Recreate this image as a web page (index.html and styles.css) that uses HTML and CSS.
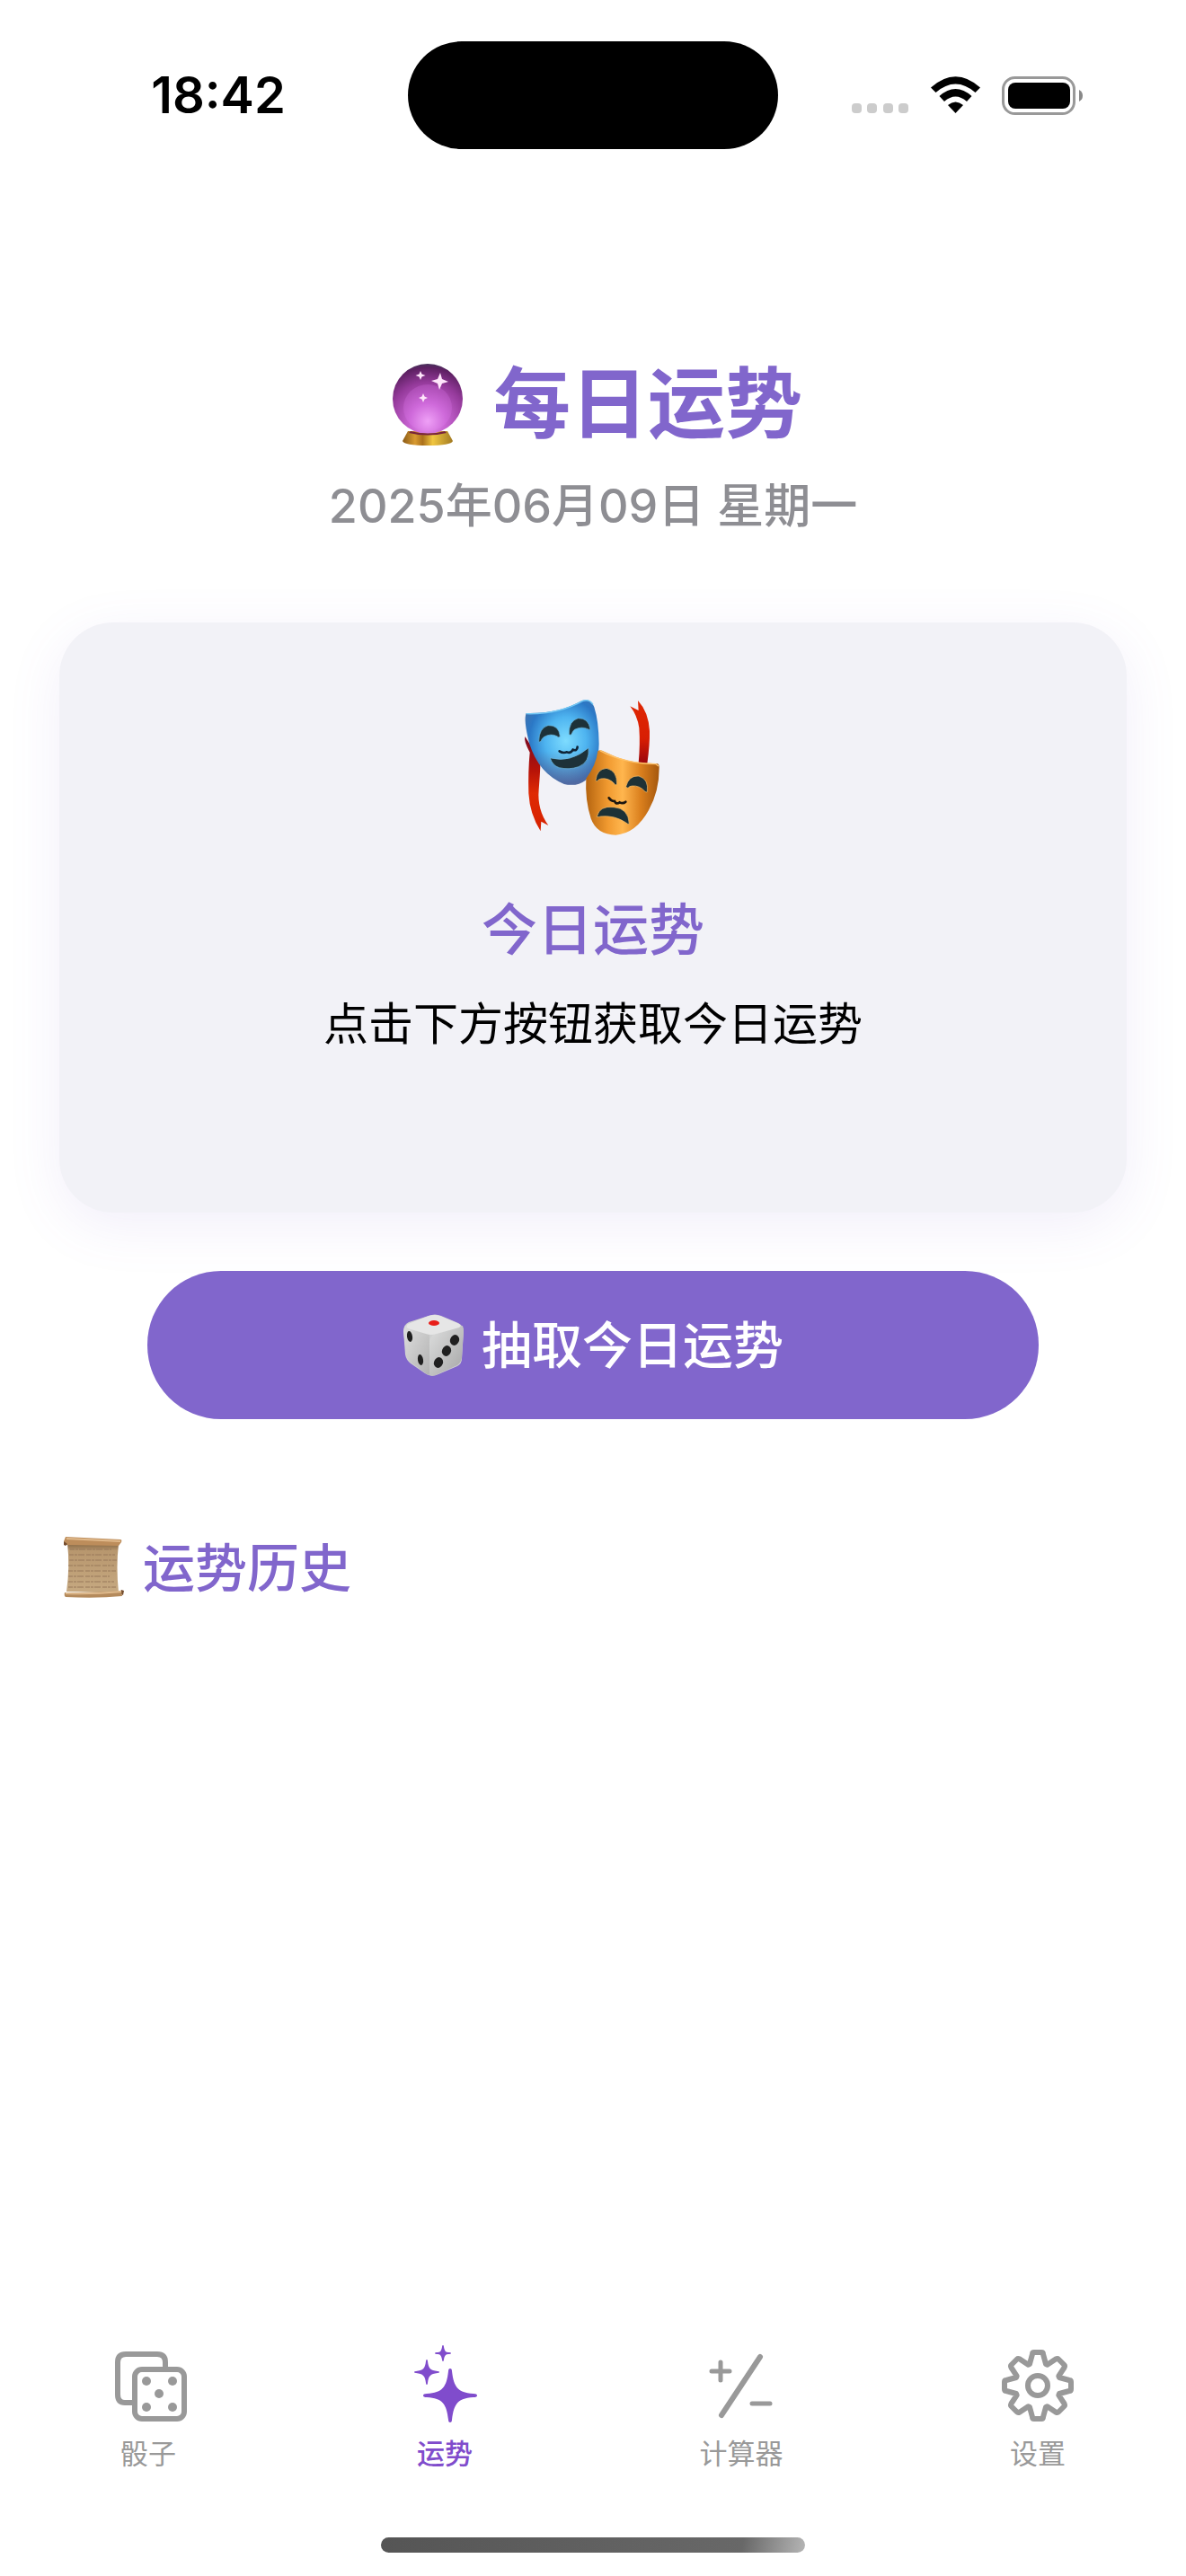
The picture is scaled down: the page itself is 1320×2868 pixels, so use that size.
FILE: index.html
```html
<!DOCTYPE html>
<html lang="zh-CN">
<head>
  <meta charset="UTF-8" />
  <meta name="viewport" content="width=device-width, initial-scale=1" />
  <title>每日运势</title>
  <link rel="stylesheet" href="styles.css">
</head>
<body>
  <div class="status-bar">
    <div class="time">18:42</div>
    <div class="island"></div>
    <div class="status-icons">
      <svg class="signal" viewBox="0 0 64 44" aria-hidden="true">
        <rect x="0" y="31" width="11" height="11" rx="4" />
        <rect x="17" y="31" width="11" height="11" rx="4" />
        <rect x="35" y="31" width="11" height="11" rx="4" />
        <rect x="52" y="31" width="11" height="11" rx="4" />
      </svg>
      <svg class="wifi" viewBox="0 0 55 44" aria-hidden="true">
        <path d="M0 13.500Q27.500-11 55 13.500L49.500 19Q27.500 0 5.500 19Z" />
        <path d="M9.500 23Q27.500 7 45.500 23L40 29Q27.500 18 15 29Z" />
        <path d="M19 33Q27.500 26 36 33L27.500 42Z" />
      </svg>
      <svg class="battery" viewBox="0 0 90 44" aria-hidden="true">
        <rect x="1.500" y="2.500" width="79" height="40" rx="13" fill="none" stroke="#999" stroke-width="3" />
        <rect x="7" y="8" width="69" height="29" rx="8" />
        <path d="M86 16q4 2 4 6.500t-4 6.500z" fill="#888" />
      </svg>
    </div>
  </div>

  <main>
    <header>
      <h1>
        <svg class="ball" viewBox="-10 -4 98 98" aria-hidden="true">
          <defs>
            <radialGradient id="ball" cx="50%" cy="82%" r="85%">
              <stop offset="0" stop-color="#f0a8f6" />
              <stop offset=".3" stop-color="#c864d3" />
              <stop offset=".65" stop-color="#953a9b" />
              <stop offset=".9" stop-color="#5d2062" />
              <stop offset="1" stop-color="#3d3b58" />
            </radialGradient>
            <linearGradient id="gold">
              <stop offset="0" stop-color="#8a5a16" />
              <stop offset=".25" stop-color="#d89a31" />
              <stop offset=".4" stop-color="#ab701c" />
              <stop offset=".6" stop-color="#f0c640" />
              <stop offset="1" stop-color="#a27a22" />
            </linearGradient>
          </defs>
          <path d="M17 75h44l6 11q-2 5-28 5t-28-5z" fill="url(#gold)" />
          <circle cx="39" cy="39" r="39" fill="url(#ball)" />
          <ellipse cx="39" cy="49" rx="27" ry="26" fill="#eb82fa" opacity=".2" />
          <path d="M20 75q19 5 38 0l2 2q-21 5-42 0z" fill="#78243c" />
          <path d="M31 8l1.500 3.500 4 1.500-4 1.500L31 18l-1.500-3.500-4-1.500 4-1.500zM53 10l2 7 7 3-7 2-3 7-2-7-7-3 7-2zM34 33l1.500 3.500 3.500 1.500-3.500 1.500L34 43l-1.500-3.500L29 38l3.500-1.500z" fill="#ffe6fb" />
        </svg>
        <span>每日运势</span>
      </h1>
      <p class="date">2025年06月09日 星期一</p>
    </header>

    <section class="card">
      <svg class="masks" viewBox="0 0 660 600" aria-hidden="true">
        <defs>
          <radialGradient id="blue" cx="55%" cy="48%" r="62%">
            <stop offset="0" stop-color="#7edcff" />
            <stop offset=".45" stop-color="#4eb4f0" />
            <stop offset=".8" stop-color="#2b78c6" />
            <stop offset="1" stop-color="#3d73b2" />
          </radialGradient>
          <linearGradient id="orange">
            <stop offset="0" stop-color="#b5640f" />
            <stop offset=".3" stop-color="#f19a30" />
            <stop offset=".5" stop-color="#ffb64e" />
            <stop offset=".75" stop-color="#da7f1d" />
            <stop offset="1" stop-color="#a4570d" />
          </linearGradient>
          <linearGradient id="ribbon" x1="0" y1="0" x2="0" y2="1">
            <stop offset="0" stop-color="#7b0a22" />
            <stop offset=".35" stop-color="#b51208" />
            <stop offset=".6" stop-color="#df2a04" />
            <stop offset="1" stop-color="#d62100" />
          </linearGradient>
          <linearGradient id="ribbonUp" x1="0" y1="1" x2="0" y2="0">
            <stop offset="0" stop-color="#99060d" />
            <stop offset=".4" stop-color="#d81e03" />
            <stop offset="1" stop-color="#df2703" />
          </linearGradient>
          <linearGradient id="glow" x1="0" y1="0" x2="0" y2="1">
            <stop offset=".6" stop-color="#984343" stop-opacity="0" />
            <stop offset="1" stop-color="#985060" stop-opacity=".35" />
          </linearGradient>
        </defs>
        <path d="M103 210q-5 14 16 53-6 63-4 137 4 70 40 126l2-32 24 13q-38-52-32-119 4-51 6-98z" fill="url(#ribbon)" />
        <path d="M454 109q24 31 30 72 4 55-2 118l29 2q9-66 8-110-4-64-39-101l2 33z" fill="url(#ribbonUp)" />
        <path d="M107 132Q214 135 293 90q29-10 41 22 15 47 16 123-1 70-45 121-29 22-71 13-85-35-116-134-21-80-11-103z" fill="url(#blue)" />
        <path d="M107 132Q214 135 293 90q29-10 41 22 15 47 16 123-1 70-45 121-29 22-71 13-85-35-116-134-21-80-11-103z" fill="url(#glow)" />
        <path d="M107 134Q214 137 296 91q22-7 34 12" fill="none" stroke="#72c8f4" stroke-width="4" />
        <g fill="#1d3138" stroke="#70b8dd" stroke-width="2">
          <path d="M149 226q1-45 31-53 36-2 40 37-6 5-10-1-22-11-45 3-6 5-9 14-4 4-7 0z" />
          <path d="M250 202q-1-44 30-53 34-2 41 36-3 4-8 0-21-10-45 2-7 6-9 14-4 7-9 1z" />
          <path d="M188 282q68 17 127-34 5 48-33 63-31 11-65 3-22-7-30-32z" />
        </g>
        <path d="M218 259q12 8 25 3 12 6 20-8 14 6 15-9" fill="none" stroke="#102537" stroke-width="8" stroke-linecap="round" />
        <path d="M346 259q7-8 23 2 80 42 173 39 10 0 9 15 0 78-35 141-43 78-110 83-64-1-83-55-20-64-16-134 33-43 39-91z" fill="url(#orange)" />
        <path d="M353 257q82 44 187 45l9 7" fill="none" stroke="#ffc36b" stroke-width="4" />
        <g fill="#1d3136" stroke="#ffc36b" stroke-width="2">
          <path d="M339 356q4-37 36-40 36 8 35 54-5 4-8-2-20-21-45-17-9 2-13 8-4 1-5-3z" />
          <path d="M440 377q10-38 43-35 34 10 28 53-4 3-8-2-18-20-42-18-9 0-14 7-5 0-7-5z" />
          <path d="M343 478q8-38 56-32 50 3 52 57-5 0-12-6-38-25-84-20-6 3-12 1z" />
        </g>
        <path d="M383 415q8 12 19 11 5 12 17 4 11 6 20-2" fill="none" stroke="#1a1611" stroke-width="8" stroke-linecap="round" />
      </svg>
      <h2>今日运势</h2>
      <p>点击下方按钮获取今日运势</p>
    </section>

    <button type="button" class="draw-btn">
      <svg class="die" viewBox="0 0 72 72" aria-hidden="true">
        <defs>
          <linearGradient id="dieLeft" x1="0" y1="0" x2="1" y2="1">
            <stop offset="0" stop-color="#dedede" />
            <stop offset="1" stop-color="#b2b2b2" />
          </linearGradient>
          <linearGradient id="dieRight" x1="0" y1="0" x2="1" y2="1">
            <stop offset="0" stop-color="#dedfdf" />
            <stop offset="1" stop-color="#a6a6a6" />
          </linearGradient>
        </defs>
        <path d="M7 10L29 3q7-3 14 0l19 8q6 3 6 9l-2 31q0 5-5 8L40 68q-8 4-15-1L9 56q-5-4-6-10L1 20q0-7 6-10z" fill="#d0d1d1" />
        <path d="M3 14L30 24V69q-4-1-7-4L8 54q-3-3-4-8L1 20z" fill="url(#dieLeft)" />
        <path d="M67 14L34 24Q30 28 30 34V69q5 2 11-2l20-9q5-4 5-9l2-30z" fill="url(#dieRight)" />
        <path d="M6 12L29 3q6-2 13 0l21 9q3 2 0 4L38 23q-6 2-12 0L6 17q-3-3 0-5z" fill="#e6e6e6" />
        <ellipse cx="35" cy="11" rx="6" ry="3" fill="#e81e19" />
        <g fill="#202020">
          <ellipse cx="8" cy="26" rx="3" ry="6" transform="rotate(-9 8 26)" />
          <ellipse cx="20" cy="52" rx="3" ry="6" transform="rotate(-9 20 52)" />
          <ellipse cx="58" cy="30" rx="5" ry="6" transform="rotate(22 58 30)" />
          <ellipse cx="49" cy="42" rx="5" ry="6" transform="rotate(22 49 42)" />
          <ellipse cx="40" cy="55" rx="5" ry="6" transform="rotate(22 40 55)" />
        </g>
      </svg>
      <span>抽取今日运势</span>
    </button>

    <section class="history">
      <h3>
        <svg class="scroll" viewBox="0 0 68 70" aria-hidden="true">
          <defs>
            <linearGradient id="paper" x1="0" y1="0" x2="0" y2="1">
              <stop offset="0" stop-color="#80623f" />
              <stop offset=".15" stop-color="#b8976e" />
              <stop offset="1" stop-color="#c6a981" />
            </linearGradient>
          </defs>
          <path d="M4 7l57 1q-3 25 0 54l-58-1q4-28 1-54z" fill="url(#paper)" />
          <path d="M2 0l61 3q2 0 1 3l-3 4-59-1-2-4z" fill="#bd8d5b" />
          <path d="M3 2l60 3" stroke="#e0b98b" stroke-width="2" />
          <path d="M0 5l4 3-2 2-2-1zM64 59l3 1-1 5-4-2z" fill="#744c2e" />
          <path d="M1 62q30 0 63-2l1 6q-29 3-63 1-2-1-1-5z" fill="#b48a5c" />
          <path d="M2 63q30 1 62-2" fill="none" stroke="#dfba8d" stroke-width="2" />
          <g stroke="#98795a" stroke-width="1" stroke-dasharray="5 1 3 1 7 2">
            <path d="M7 14h46M6 20h51M6 26h53M5 32h51M5 38h53M5 44h46M5 50h51M5 56h53" />
          </g>
        </svg>
        <span>运势历史</span>
      </h3>
    </section>
  </main>

  <nav class="tab-bar">
    <a href="#dice">
      <svg viewBox="0 0 86 86" fill="none" stroke="currentColor" stroke-width="6" aria-hidden="true">
        <path d="M26 63h-9q-8 0-8-9V18q0-9 9-9h35q9 0 9 9v7" />
        <rect x="28" y="26" width="55" height="55" rx="8" />
        <g fill="currentColor" stroke="none">
          <circle cx="41" cy="39" r="5" />
          <circle cx="70" cy="39" r="5" />
          <circle cx="55" cy="53" r="5" />
          <circle cx="41" cy="68" r="5" />
          <circle cx="70" cy="68" r="5" />
        </g>
      </svg>
      <span>骰子</span>
    </a>
    <a href="#fortune" class="active">
      <svg viewBox="0 0 86 86" fill="currentColor" aria-hidden="true">
        <path d="M49 25q2 0 2 3C53 45 57 52 75 53q4 0 4 2t-4 2C57 58 53 65 51 82q0 3-2 3t-2-3C45 65 41 58 23 57q-4 0-4-2t4-2C41 52 45 45 47 28q0-3 2-3z" />
        <path d="M23 15q1 0 1 2C25 25 27 27 35 28q2 0 2 1t-2 1C27 31 25 33 24 41q0 2-1 2t-1-2C21 33 19 31 11 30q-2 0-2-1t2-1C19 27 21 25 22 17q0-2 1-2z" />
        <path d="M41-1q1 0 1 2C43 6 44 7 48 7q2 0 2 1t-2 1C44 9 43 10 42 15q0 2-1 2t-1-2C39 10 38 9 34 9q-2 0-2-1t2-1C38 7 39 6 40 1q0-2 1-2z" />
      </svg>
      <span>运势</span>
    </a>
    <a href="#calculator">
      <svg viewBox="0 0 86 86" fill="none" stroke="currentColor" stroke-width="5" stroke-linecap="round" aria-hidden="true">
        <path d="M10 28h20M20 18v20" />
        <path d="M64 12L21 77" stroke-width="6" />
        <path d="M55 64h20" />
      </svg>
      <span>计算器</span>
    </a>
    <a href="#settings">
      <svg viewBox="-3 -4 86 86" fill="none" stroke="currentColor" stroke-width="6" stroke-linejoin="round" aria-hidden="true">
        <path d="M31 16L34 5q0-2 2-2h8q2 0 2 2l3 11 1.600.700L60 10.500q2-1 3 0l6.500 6.500q1 1 0 3l-6.200 9.400.7 1.600 11 3q2 0 2 2v8q0 2-2 2l-11 3-.7 1.600 6.200 9.400q1 2 0 3L63 69.500q-1 1-3 0l-9.400-6.200L49 64l-3 11q0 2-2 2h-8q-2 0-2-2l-3-11-1.600-.7L20 69.500q-2 1-3 0L10.500 63q-1-1 0-3l6.200-9.400L16 49 5 46q-2 0-2-2v-8q0-2 2-2l11-3 .7-1.600L10.500 20q-1-2 0-3l6.500-6.500q1-1 3 0l9.400 6.200z" />
        <circle cx="40" cy="40" r="11" />
      </svg>
      <span>设置</span>
    </a>
  </nav>
  <div class="home-indicator"></div>
</body>
</html>
```
FILE: styles.css
```css
* {
  box-sizing: border-box;
  margin: 0;
  padding: 0;
}

body {
  font-family: Inter, "Noto Sans CJK SC", sans-serif;
  background: #fff;
  color: #000;
  min-height: 100vh;
  display: flex;
  flex-direction: column;
}

svg {
  flex: none;
  overflow: visible;
}

/* Status bar */
.status-bar {
  display: grid;
  grid-template-columns: 1fr auto 1fr;
  align-items: center;
  padding-top: 46px;
}

.time {
  padding-left: 32px;
  text-align: center;
  font-size: 56px;
  font-weight: 600;
}

.island {
  width: 412px;
  height: 120px;
  border-radius: 60px;
  background: #000;
}

.status-icons {
  display: flex;
  justify-content: center;
  gap: 24px;
  padding-right: 34px;
}

.status-icons svg {
  height: 44px;
}

.signal {
  width: 64px;
  fill: #ccc;
}

.wifi {
  width: 55px;
}

.battery {
  width: 90px;
}

/* Content */
main {
  flex: 1;
  display: flex;
  flex-direction: column;
  padding: 232px 66px 0;
}

header {
  text-align: center;
}

h1,
h2,
h3 {
  color: #8166cc;
}

h1 {
  display: flex;
  align-items: center;
  justify-content: center;
  gap: 24px;
  font-size: 86px;
  line-height: 104px;
}

.ball {
  width: 98px;
  height: 98px;
}

.date {
  margin-top: 28px;
  color: #8e8e93;
  font-size: 52px;
  font-weight: 500;
  line-height: 68px;
}

.card {
  display: flex;
  flex-direction: column;
  align-items: center;
  margin-top: 95px;
  padding: 57px 48px 176px;
  border-radius: 60px;
  background: #f2f2f7;
  box-shadow: 0 15px 60px rgba(129, 102, 204, 0.1);
}

.masks {
  width: 220px;
  height: 200px;
}

.card h2 {
  margin-top: 44px;
  font-size: 62px;
  font-weight: 500;
  line-height: 84px;
}

.card p {
  margin-top: 28px;
  font-size: 50px;
  line-height: 68px;
}

.draw-btn {
  display: flex;
  align-items: center;
  justify-content: center;
  gap: 16px;
  margin: 65px 98px 0;
  height: 165px;
  border: none;
  border-radius: 82px;
  background: #8166cc;
  color: #fff;
  font: inherit;
  font-size: 56px;
  font-weight: 500;
  line-height: 84px;
  cursor: pointer;
}

.draw-btn:hover {
  background: #7458c2;
}

.die {
  width: 72px;
  height: 72px;
}

.history {
  margin-top: 124px;
}

.history h3 {
  display: flex;
  align-items: center;
  gap: 20px;
  padding-left: 5px;
  font-size: 58px;
  font-weight: 500;
  line-height: 84px;
}

.scroll {
  width: 68px;
  height: 70px;
}

/* Tab bar */
.tab-bar {
  display: grid;
  grid-template-columns: repeat(4, 1fr);
}

.tab-bar a {
  display: flex;
  flex-direction: column;
  align-items: center;
  gap: 12px;
  color: #999;
  font-size: 31px;
  line-height: 44px;
  text-decoration: none;
}

.tab-bar .active {
  color: #804ccc;
  font-weight: 500;
}

.tab-bar svg {
  width: 86px;
  height: 86px;
}

.home-indicator {
  width: 472px;
  height: 17px;
  margin: 71px auto 26px;
  border-radius: 9px;
  background: linear-gradient(100deg, #555 0%, #686868 85%, #b5b5b5 100%);
}
```
